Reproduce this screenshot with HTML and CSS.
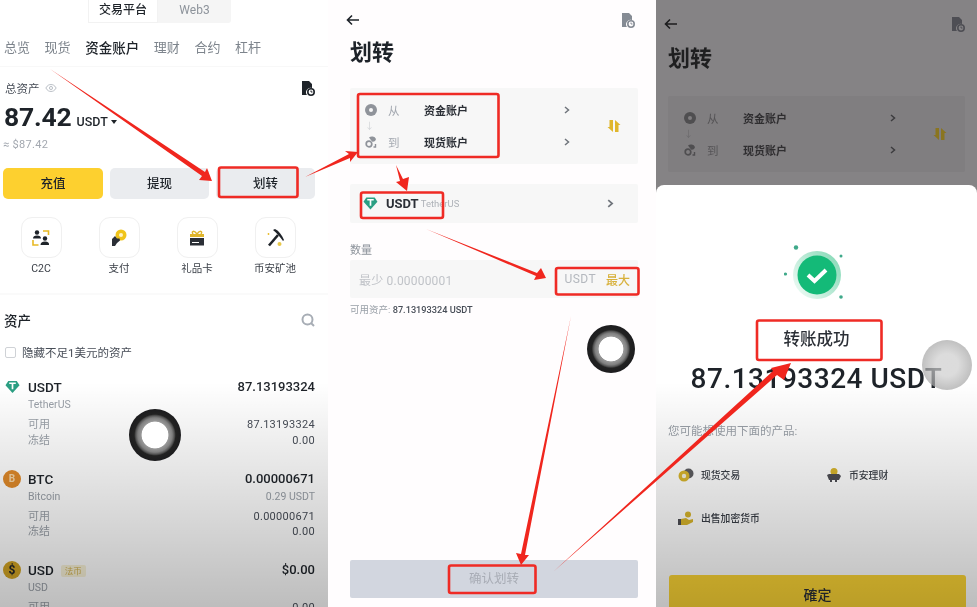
FILE: index.html
```html
<!DOCTYPE html>
<html>
<head>
    <title>划转教程</title>
    <link rel="stylesheet" href="styles.css">
</head>
<body>
    <svg class="defs" width="0" height="0">
        <symbol id="history" viewBox="0 0 14 15">
            <path d="M1 0H8L11 3V7A4.500 4.500 0 0 0 6 14H1Z" fill="currentColor"/>
            <circle cx="10" cy="11" r="3.200" fill="none" stroke="currentColor" stroke-width="1.600"/>
            <path d="M10 9.500V11H11.500" fill="none" stroke="currentColor" stroke-width="1"/>
        </symbol>
        <symbol id="chevron" viewBox="0 0 6 8">
            <path d="M1 1L4.500 4L1 7" fill="none" stroke="currentColor" stroke-width="1.500"/>
        </symbol>
        <symbol id="back" viewBox="0 0 14 12">
            <path d="M13 6H2M6 1.500L1.500 6L6 10.500" fill="none" stroke="currentColor" stroke-width="1.600"/>
        </symbol>
        <symbol id="tether" viewBox="0 0 16 14">
            <path d="M3.500 0.500H12.500L15.500 5L8 13.500L0.500 5Z" fill="currentColor"/>
            <path d="M4.500 3H11.500M8 3V9.500" fill="none" stroke="#fff" stroke-width="1.800"/>
        </symbol>
        <symbol id="swap" viewBox="0 0 14 14">
            <path d="M2.500 1H6V13L0.500 8H2.500ZM8 1L13.500 6H11.500V13H8Z" fill="currentColor"/>
        </symbol>
        <symbol id="from" viewBox="0 0 12 12">
            <circle cx="6" cy="6" r="6" fill="currentColor"/>
            <circle cx="6" cy="6" r="2" fill="var(--hole, #f7f7f7)"/>
        </symbol>
        <symbol id="to" viewBox="0 0 12 12">
            <circle cx="4" cy="8" r="2.800" fill="none" stroke="currentColor" stroke-width="1.700"/>
            <path d="M4 1.500A4.500 4.500 0 0 1 11 3A3 3 0 0 1 7 5.500Z" fill="currentColor"/>
            <path d="M10.500 8V11H8.500" fill="none" stroke="currentColor" stroke-width="1.400"/>
        </symbol>
    </svg>

    <div class="page">
        <!-- 资金账户 -->
        <section class="panel panel-fade">
            <div class="segment">
                <span class="segment-on">交易平台</span>
                <span class="segment-off">Web3</span>
            </div>
            <nav class="tabs">
                <span>总览</span><span>现货</span><span class="tab-on">资金账户</span><span>理财</span><span>合约</span><span>杠杆</span>
            </nav>

            <div class="total">
                <div class="total-head">
                    <span>总资产</span>
                    <svg class="eye" viewBox="0 0 14 10"><path d="M1 5C3 1.500 5 1 7 1S11 1.500 13 5C11 8.500 9 9 7 9S3 8.500 1 5Z" fill="none" stroke="currentColor"/><circle cx="7" cy="5" r="1.800" fill="none" stroke="currentColor"/></svg>
                    <svg class="history"><use href="#history"/></svg>
                </div>
                <div class="balance"><b>87.42</b><span>USDT</span><i class="caret"></i></div>
                <div class="approx">≈ $87.42</div>
                <div class="actions">
                    <span class="btn btn-yellow">充值</span>
                    <span class="btn">提现</span>
                    <span class="btn">划转</span>
                </div>
            </div>

            <div class="shortcuts">
                <div class="shortcut">
                    <span class="shortcut-box">
                        <svg viewBox="0 0 18 16" width="18" height="16">
                            <path d="M11 1H16.500V5M1 10V15H6.500" fill="none" stroke="#e8b923" stroke-width="1.600"/>
                            <circle cx="5" cy="2.500" r="2.200" fill="#1e2329"/><path d="M1 8.500Q1 5.500 5 5.500T9 8.500Z" fill="#1e2329"/>
                            <circle cx="13" cy="8.500" r="2.200" fill="#1e2329"/><path d="M8.500 15Q8.500 11.500 13 11.500T17 15Z" fill="#1e2329"/>
                        </svg>
                    </span>
                    <span>C2C</span>
                </div>
                <div class="shortcut">
                    <span class="shortcut-box">
                        <svg viewBox="0 0 18 18" width="18" height="18">
                            <circle cx="11" cy="6" r="5.500" fill="#f0c419"/><circle cx="11" cy="6" r="2" fill="#fff3c4"/>
                            <path d="M2 10L5 7L7 9.500H9.500L10 11.500L7 14L5 17H2Z" fill="#2b2f36"/>
                        </svg>
                    </span>
                    <span>支付</span>
                </div>
                <div class="shortcut">
                    <span class="shortcut-box">
                        <svg viewBox="0 0 16 16" width="16" height="16">
                            <path d="M8 4C5 0 2 1 4 4M8 4C11 0 14 1 12 4" fill="none" stroke="#e0b62c" stroke-width="1.500"/>
                            <path d="M1 4H15V7H1Z" fill="#e0b62c"/><path d="M1 8H15V15.500H1Z" fill="#2b2f36"/>
                            <path d="M3 12.500H10" stroke="#fff"/>
                        </svg>
                    </span>
                    <span>礼品卡</span>
                </div>
                <div class="shortcut">
                    <span class="shortcut-box">
                        <svg viewBox="0 0 20 20" width="20" height="20">
                            <path d="M4 17.500L13 7" stroke="#1e2329" stroke-width="2.600"/>
                            <path d="M8 2L10 1C14 3 17 7 19 12L18 13C15 9 12 5 8 2Z" fill="#1e2329"/>
                            <circle cx="3.500" cy="6" r="0.900" fill="#e8b923"/><circle cx="14.500" cy="16" r="2" fill="#e8c84a"/>
                        </svg>
                    </span>
                    <span>币安矿池</span>
                </div>
            </div>

            <div class="assets">
                <div class="assets-head">
                    <b>资产</b>
                    <svg class="search" viewBox="0 0 14 14"><circle cx="6.500" cy="6.500" r="5" fill="none" stroke="currentColor" stroke-width="2"/><path d="M10 10L13 13" stroke="currentColor" stroke-width="2"/></svg>
                </div>
                <label class="hide-small"><i class="checkbox"></i>隐藏不足1美元的资产</label>

                <div class="asset">
                    <svg class="coin coin-usdt"><use href="#tether"/></svg>
                    <div class="asset-row asset-main"><span>USDT</span><b>87.13193324</b></div>
                    <div class="asset-row asset-sub"><span>TetherUS</span></div>
                    <div class="asset-row asset-line"><span>可用</span><em>87.13193324</em></div>
                    <div class="asset-row asset-line"><span>冻结</span><em>0.00</em></div>
                </div>
                <div class="asset">
                    <span class="coin coin-round coin-btc">B</span>
                    <div class="asset-row asset-main"><span>BTC</span><b>0.00000671</b></div>
                    <div class="asset-row asset-sub"><span>Bitcoin</span><span>0.29 USDT</span></div>
                    <div class="asset-row asset-line"><span>可用</span><em>0.00000671</em></div>
                    <div class="asset-row asset-line"><span>冻结</span><em>0.00</em></div>
                </div>
                <div class="asset">
                    <span class="coin coin-round coin-usd">$</span>
                    <div class="asset-row asset-main"><span>USD<i class="fiat">法币</i></span><b>$0.00</b></div>
                    <div class="asset-row asset-sub"><span>USD</span></div>
                    <div class="asset-row asset-line"><span>可用</span><em>0.00</em></div>
                </div>
            </div>
            <span class="touch touch-one"></span>
        </section>

        <!-- 划转表单 -->
        <section class="panel panel-form">
            <div class="topbar">
                <svg class="back"><use href="#back"/></svg>
                <svg class="history history-gray"><use href="#history"/></svg>
            </div>
            <h1 class="title">划转</h1>

            <div class="card route">
                <div class="route-rows">
                    <div class="route-row">
                        <svg class="route-icon"><use href="#from"/></svg>
                        <span class="route-label">从</span>
                        <b>资金账户</b>
                        <svg class="chevron"><use href="#chevron"/></svg>
                    </div>
                    <div class="route-arrow">↓</div>
                    <div class="route-row">
                        <svg class="route-icon"><use href="#to"/></svg>
                        <span class="route-label">到</span>
                        <b>现货账户</b>
                        <svg class="chevron"><use href="#chevron"/></svg>
                    </div>
                </div>
                <svg class="swap"><use href="#swap"/></svg>
            </div>

            <div class="card coin-pick">
                <svg class="coin-pick-icon"><use href="#tether"/></svg>
                <b>USDT</b>
                <span>TetherUS</span>
                <svg class="chevron chevron-end"><use href="#chevron"/></svg>
            </div>

            <div class="amount-label">数量</div>
            <div class="card amount">
                <span class="amount-hint">最少 0.00000001</span>
                <span class="amount-unit">USDT</span>
                <b>最大</b>
            </div>
            <div class="available">可用资产: <b>87.13193324 USDT</b></div>

            <div class="confirm">确认划转</div>
            <span class="touch touch-two"></span>
        </section>

        <!-- 转账成功 -->
        <section class="panel panel-dim panel-fade">
            <div class="dim-top">
                <div class="topbar">
                    <svg class="back"><use href="#back"/></svg>
                    <svg class="history history-dim"><use href="#history"/></svg>
                </div>
                <h1 class="title">划转</h1>
                <div class="card route">
                    <div class="route-rows">
                        <div class="route-row">
                            <svg class="route-icon"><use href="#from"/></svg>
                            <span class="route-label">从</span>
                            <b>资金账户</b>
                            <svg class="chevron"><use href="#chevron"/></svg>
                        </div>
                        <div class="route-arrow">↓</div>
                        <div class="route-row">
                            <svg class="route-icon"><use href="#to"/></svg>
                            <span class="route-label">到</span>
                            <b>现货账户</b>
                            <svg class="chevron"><use href="#chevron"/></svg>
                        </div>
                    </div>
                    <svg class="swap"><use href="#swap"/></svg>
                </div>
            </div>

            <div class="sheet">
                <svg class="success" viewBox="0 0 64 64" width="64" height="64">
                    <defs>
                        <linearGradient id="halo" x1="0.900" y1="0.200" x2="0.100" y2="0.800">
                            <stop offset="0" stop-color="#8fdcbc"/>
                            <stop offset="1" stop-color="#e6f8f0"/>
                        </linearGradient>
                    </defs>
                    <circle cx="33" cy="32" r="24" fill="url(#halo)"/>
                    <circle cx="33" cy="32" r="19.500" fill="#14ba78"/>
                    <path d="M24 32L30.500 38L42 27" fill="none" stroke="#fff" stroke-width="4"/>
                    <circle cx="12" cy="4.500" r="2.200" fill="#3fa98a"/>
                    <circle cx="57" cy="13" r="1.500" fill="#3fa98a"/>
                    <circle cx="1.500" cy="31" r="1.600" fill="#3fa98a"/>
                    <circle cx="57" cy="54" r="1.800" fill="#3fa98a"/>
                </svg>
                <div class="success-title">转账成功</div>
                <div class="success-amount">87.13193324 USDT</div>
                <div class="suggest">您可能想使用下面的产品:</div>
                <div class="products">
                    <div class="product">
                        <svg viewBox="0 0 16 14" width="16" height="14"><circle cx="10.500" cy="5.500" r="5" fill="#5d5d60"/><circle cx="6" cy="8" r="5.500" fill="#d8b52c"/><circle cx="6" cy="8" r="2.200" fill="#f4f0dc"/></svg>
                        <span>现货交易</span>
                    </div>
                    <div class="product">
                        <svg viewBox="0 0 16 14" width="16" height="14"><circle cx="8" cy="3.500" r="3.500" fill="#d8b52c"/><path d="M1 7L3 6H13L15 8L13 12H11V14H9V12H6V14H4V12H3Z" fill="#4e4e54"/></svg>
                        <span>币安理财</span>
                    </div>
                    <div class="product">
                        <svg viewBox="0 0 16 14" width="16" height="14"><circle cx="10" cy="3.500" r="3" fill="#d8b52c"/><rect y="8" width="3" height="6" fill="#4e4e54"/><path d="M3 8L8 7L11 9L15 8V11L9 14H3Z" fill="#d8b52c"/></svg>
                        <span>出售加密货币</span>
                    </div>
                </div>
                <div class="ok-btn">確定</div>
            </div>
            <span class="touch touch-three"></span>
        </section>
    </div>

    <!-- 教程标注：红框和箭头 -->
    <svg class="marks" viewBox="0 0 977 607" width="977" height="607">
        <g class="mark-box">
            <rect x="219" y="167.500" width="78.500" height="29.500" rx="2"/>
            <rect x="358" y="94" width="140.500" height="63" rx="2"/>
            <rect x="361" y="192.500" width="82" height="25.500" rx="2"/>
            <rect x="556" y="268" width="82.500" height="26.500" rx="2"/>
            <rect x="449" y="565.500" width="86.500" height="27.500" rx="2"/>
            <rect x="757" y="320.500" width="124.500" height="39.500" rx="2"/>
        </g>
        <g class="mark-arrow">
            <path d="M50 69L205 172L207 168L212 181L199 180L202 176Z"/>
            <path d="M305 177L349 154L345 151L358 152L350 162L350 158Z"/>
            <path d="M396 165L403 179L409 177L407 191L396 182L400 181Z"/>
            <path d="M426 229L537 273L541 268L546 278L534 280L536 276Z"/>
            <path d="M571 316L525 555L529 555L521 565L516 553L521 554Z"/>
            <path d="M553 572L773 371L771 368L791 363L784 380L777 375Z"/>
        </g>
    </svg>
</body>
</html>
```

FILE: styles.css
```css
* {
    box-sizing: border-box;
}
html, body {
    margin: 0;
    height: 100%;
    overflow: hidden;
}
body {
    position: relative;
    font-family: Roboto, "Noto Sans CJK SC", sans-serif;
    color: #1e2329;
    background: #fff;
}
.defs {
    position: absolute;
}
.page {
    display: grid;
    grid-template-columns: 328px 328px 321px;
    height: 607px;
}
.panel {
    position: relative;
    overflow: hidden;
    height: 607px;
    background: #fff;
    filter: blur(0.35px);
}
.panel-fade::after {
    content: "";
    position: absolute;
    left: 0;
    right: 0;
    bottom: 0;
    height: 225px;
    background: linear-gradient(rgba(0,0,0,0), rgba(0,0,0,0.26));
    pointer-events: none;
}
.touch {
    position: absolute;
    z-index: 2;
    border-radius: 50%;
}
.touch-one, .touch-two {
    background: radial-gradient(circle closest-side, #fff 0 50%, #999 53%, #808080 66%, #555 74%, #222 80%, #1c1c1e 100%);
}
.touch-one {
    left: 129px;
    top: 409px;
    width: 52px;
    height: 52px;
}
.touch-two {
    left: 259px;
    top: 325px;
    width: 48px;
    height: 48px;
}
.touch-three {
    left: 266px;
    top: 340px;
    width: 50px;
    height: 50px;
    background: radial-gradient(circle closest-side, rgba(205,205,205,0.7) 0 45%, rgba(165,165,165,0.7) 100%);
}

/* first phone */
.segment {
    display: flex;
    width: 143px;
    height: 23px;
    margin-left: 88px;
    font-size: 12px;
    line-height: 20px;
    text-align: center;
    background: #f5f5f5;
    border-radius: 0 0 3px 3px;
}
.segment-on {
    width: 70px;
    font-weight: 500;
    background: #fff;
    border: 1px solid #f2f2f2;
    border-top: 0;
}
.segment-off {
    flex: 1;
    color: #8d939b;
}
.tabs {
    display: flex;
    gap: 14.600px;
    height: 44px;
    padding: 15px 0 0 4px;
    font-size: 13px;
    line-height: 20px;
    color: #7d848c;
    border-bottom: 1px solid #f8f8f8;
}
.tab-on {
    color: #1e2329;
    font-size: 13.500px;
    font-weight: 500;
}
.total {
    padding: 0 13px 0 3px;
}
.total-head {
    display: flex;
    align-items: center;
    height: 20px;
    margin-top: 11px;
    padding-left: 2px;
    font-size: 11.500px;
    color: #474d57;
}
.eye {
    width: 12px;
    height: 10px;
    margin-left: 5px;
    color: #aeb4bc;
}
.history {
    width: 14px;
    height: 15px;
    margin-left: auto;
    color: #1e2329;
}
.balance {
    display: flex;
    align-items: baseline;
    height: 34px;
    margin-top: 2px;
    line-height: 34px;
}
.balance b {
    margin-left: 1px;
    font-size: 26.500px;
    letter-spacing: -0.2px;
}
.balance span {
    margin-left: 5px;
    font-size: 12.500px;
    font-weight: 500;
}
.caret {
    align-self: flex-end;
    width: 0;
    height: 0;
    margin: 0 0 10px 3px;
    border: 3.500px solid transparent;
    border-top: 4px solid #1e2329;
    border-bottom: 0;
}
.approx {
    height: 16px;
    margin-top: 3px;
    font-size: 11px;
    line-height: 16px;
    letter-spacing: 0.3px;
    color: #a3a8b0;
}
.actions {
    display: flex;
    gap: 7px;
    margin-top: 15px;
}
.btn {
    width: 99px;
    height: 31px;
    font-size: 12.500px;
    font-weight: 500;
    line-height: 31px;
    text-align: center;
    background: #eaecef;
    border-radius: 5px;
}
.btn-yellow {
    width: 100px;
    background: #fdd02f;
}
.shortcuts {
    display: flex;
    height: 96px;
    padding: 18px 0 0 2px;
    border-bottom: 2px solid #fafafa;
}
.shortcut {
    display: flex;
    flex-direction: column;
    align-items: center;
    width: 78px;
    gap: 3px;
    font-size: 10.500px;
    line-height: 16px;
    color: #3a3f47;
}
.shortcut-box {
    display: flex;
    align-items: center;
    justify-content: center;
    width: 41px;
    height: 41px;
    border: 1px solid #f0f0f0;
    border-radius: 11px;
}
.assets {
    padding: 0 13px 0 4px;
}
.assets-head {
    display: flex;
    align-items: center;
    justify-content: space-between;
    height: 20px;
    margin-top: 15px;
    font-size: 13.500px;
}
.assets-head b {
    font-weight: 500;
}
.search {
    width: 14px;
    height: 14px;
    color: #a7adb5;
}
.hide-small {
    display: flex;
    align-items: center;
    gap: 6px;
    height: 18px;
    margin: 13px 0 0 1px;
    font-size: 11.500px;
    color: #474d57;
}
.checkbox {
    width: 11px;
    height: 11px;
    border: 1px solid #cfd2d6;
    border-radius: 2px;
}
.asset {
    position: relative;
    height: 91.500px;
    padding-left: 24px;
}
.hide-small + .asset {
    margin-top: 17px;
}
.coin {
    position: absolute;
    left: 1px;
    top: 2px;
}
.coin-usdt {
    width: 15px;
    height: 14px;
    color: #2b9f83;
}
.coin-round {
    left: -1px;
    top: 0;
    width: 18px;
    height: 18px;
    border-radius: 50%;
    font-size: 10px;
    font-weight: 700;
    line-height: 18px;
    text-align: center;
}
.coin-btc {
    color: #f7d7a8;
    background: #e08a2a;
}
.coin-usd {
    color: #1e2329;
    background: #d2a424;
    font-size: 12px;
}
.asset-row {
    display: flex;
    justify-content: space-between;
}
.asset-main {
    height: 18px;
    font-size: 13.500px;
    line-height: 18px;
}
.asset-main span {
    font-weight: 500;
}
.asset-main b {
    font-size: 13px;
    font-weight: 500;
}
.asset-sub {
    height: 15px;
    margin-top: 1px;
    font-size: 10.500px;
    line-height: 15px;
    color: #9aa0a8;
}
.asset-line {
    height: 15.500px;
    font-size: 11px;
    line-height: 15.500px;
    color: #9aa0a8;
}
.asset-sub + .asset-line {
    margin-top: 5px;
}
.asset-line em {
    font-style: normal;
    color: #474d57;
    letter-spacing: 0.3px;
}
.fiat {
    display: inline-block;
    margin-left: 7px;
    padding: 0 4px;
    font-size: 8.500px;
    font-style: normal;
    font-weight: 400;
    line-height: 12px;
    vertical-align: 1px;
    color: #d2b04a;
    background: #f8f2d8;
    border-radius: 2px;
}

/* shared by the transfer screens */
.topbar {
    display: flex;
    align-items: center;
    justify-content: space-between;
    height: 40px;
}
.back {
    width: 14px;
    height: 12px;
    margin-left: -4px;
}
.title {
    margin: 0;
    font-size: 22px;
    font-weight: 700;
    line-height: 30px;
}
.card {
    background: #f7f7f7;
    border-radius: 2px;
}
.route {
    display: flex;
    align-items: center;
    height: 76px;
}
.route-rows {
    flex: 1;
}
.route-row {
    display: flex;
    align-items: center;
    height: 16px;
    font-size: 11px;
}
.route-row b {
    font-weight: 700;
    color: #2b2f36;
}
.route-icon {
    width: 12px;
    height: 12px;
    color: #8f939a;
}
.route-label {
    width: 36px;
    margin-left: 11px;
    font-size: 11.500px;
    color: #a3a8b0;
}
.route-arrow {
    height: 16px;
    font-size: 9px;
    line-height: 16px;
    color: #cfd2d6;
}
.chevron {
    width: 6px;
    height: 8px;
    margin-left: auto;
    color: #70757c;
}
.swap {
    width: 14px;
    height: 14px;
    color: #e0b62c;
}

/* second phone */
.panel-form {
    padding: 0 18px 0 22px;
    background: #fffdfe;
}
.history-gray {
    margin-right: 3px;
    color: #858b94;
}
.panel-form .title {
    margin-top: -2px;
    color: #1e2329;
}
.panel-form .route {
    margin-top: 20px;
    padding: 0 17px 0 15px;
}
.panel-form .route-rows {
    padding-right: 37px;
}
.coin-pick {
    display: flex;
    align-items: center;
    height: 39px;
    margin-top: 20px;
    padding: 0 24px 0 13px;
}
.coin-pick-icon {
    width: 15px;
    height: 13px;
    color: #2b9f83;
}
.coin-pick b {
    margin-left: 8px;
    font-size: 13px;
    font-weight: 700;
    color: #2b2f36;
}
.coin-pick span {
    margin-left: 2px;
    font-size: 9.500px;
    color: #aeb2b8;
}
.chevron-end {
    width: 7px;
    height: 9px;
}
.amount-label {
    height: 16px;
    margin-top: 20px;
    font-size: 11px;
    line-height: 16px;
    color: #8d939b;
}
.amount {
    display: flex;
    align-items: center;
    height: 38px;
    margin-top: 1px;
    padding: 0 8px 0 9px;
    font-size: 12px;
}
.amount-hint {
    flex: 1;
    letter-spacing: 0.2px;
    color: #c0c3c8;
}
.amount-unit {
    letter-spacing: 0.4px;
    color: #b4b8be;
}
.amount b {
    margin-left: 10px;
    font-weight: 500;
    color: #d8b13c;
}
.available {
    height: 14px;
    margin-top: 5px;
    font-size: 9.500px;
    line-height: 14px;
    color: #9aa0a8;
}
.available b {
    font-size: 9.200px;
    font-weight: 500;
    color: #474d57;
}
.confirm {
    width: 288px;
    height: 38px;
    margin-top: 243px;
    font-size: 12.500px;
    line-height: 38px;
    text-align: center;
    color: #a8acb5;
    background: #d2d6df;
    border-radius: 2px;
}

/* third phone */
.panel-dim {
    display: flex;
    flex-direction: column;
    background: #858385;
}
.dim-top {
    flex: none;
    height: 185px;
    padding: 4px 12px 0 12px;
    color: #1c1c1e;
}
.history-dim {
    color: #4e4e54;
}
.panel-dim .title {
    color: #1f1f20;
}
.panel-dim .route {
    margin-top: 22px;
    padding: 0 18px 0 16px;
    background: #807e80;
}
.panel-dim .route-rows {
    padding-right: 37px;
}
.panel-dim .route-row b {
    color: #2f2e30;
}
.panel-dim .route-icon {
    --hole: #807e80;
    color: #4f4e50;
}
.panel-dim .route-label {
    color: #555456;
}
.panel-dim .route-arrow {
    color: #6a696b;
}
.panel-dim .chevron {
    color: #3c3c3e;
}
.panel-dim .swap {
    color: #8a7520;
}
.sheet {
    flex: none;
    height: 422px;
    padding-top: 58px;
    text-align: center;
    background: #fff;
    border-radius: 8px 8px 0 0;
}
.success {
    display: block;
    margin: 0 auto;
    transform: translateX(-1px);
}
.success-title {
    margin-top: 21px;
    font-size: 16.500px;
    font-weight: 500;
    line-height: 24px;
    color: #2b2f36;
}
.success-amount {
    margin-top: 11px;
    font-size: 28px;
    font-weight: 500;
    line-height: 32px;
    letter-spacing: 0.5px;
    white-space: nowrap;
}
.suggest {
    margin-top: 27px;
    padding-left: 12px;
    font-size: 11.500px;
    line-height: 18px;
    text-align: left;
    color: #9aa0a8;
}
.products {
    display: grid;
    grid-template-columns: 148px 148px;
    row-gap: 27px;
    margin-top: 27px;
    padding-left: 22px;
}
.product {
    display: flex;
    align-items: center;
    gap: 7px;
    height: 16px;
    font-size: 9.800px;
    font-weight: 500;
    color: #3a3f47;
}
.ok-btn {
    width: 297px;
    height: 40px;
    margin: 49px 0 0 13px;
    font-size: 14px;
    font-weight: 500;
    line-height: 40px;
    color: #2b2f36;
    background: #fcd535;
    border-radius: 3px;
}

/* annotations drawn over the screenshots */
.marks {
    position: absolute;
    left: 0;
    top: 0;
    z-index: 5;
}
.mark-box rect {
    fill: none;
    stroke: #ef2b25;
    stroke-width: 2.600;
}
.mark-arrow path {
    fill: #f0261e;
}
```
